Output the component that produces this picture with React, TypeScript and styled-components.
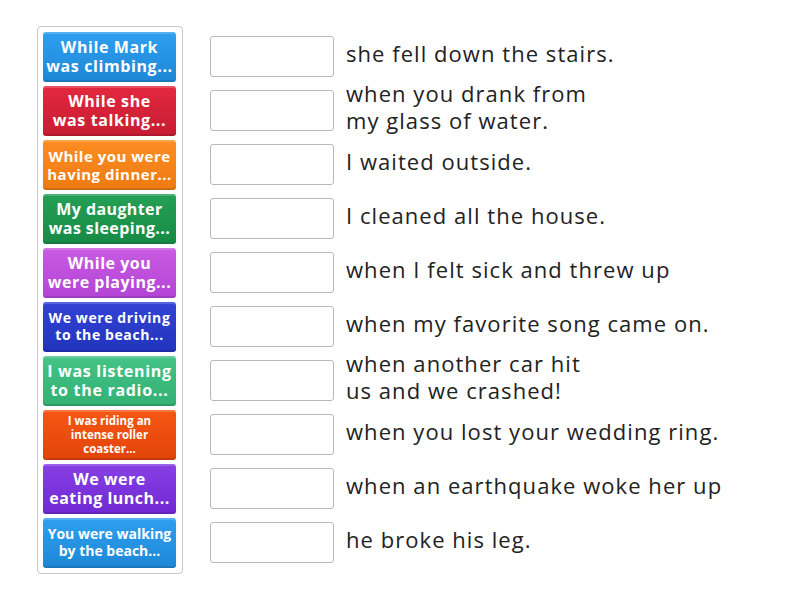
import { styled, createGlobalStyle } from "styled-components";

const GlobalStyle = createGlobalStyle`
    html, body {
        margin: 0;
        padding: 0;
        background: #ffffff;
        font-family: "Open Sans", "Noto Sans", sans-serif;
    }
`;

const tiles = [
    { text: "While Mark was climbing...", top: "#2f9ff0", bottom: "#1d87d6", size: 16, track: 0.6, pad: 3 },
    { text: "While she was talking...", top: "#e3283f", bottom: "#c71c33", size: 16, track: 0.6, pad: 8 },
    { text: "While you were having dinner...", top: "#fd8e22", bottom: "#ee7a12", size: 15, track: 0.5, pad: 2 },
    { text: "My daughter was sleeping...", top: "#24a055", bottom: "#178a45", size: 16, track: 0.4, pad: 2 },
    { text: "While you were playing...", top: "#c95ae3", bottom: "#b444d4", size: 16, track: 0.5, pad: 3 },
    { text: "We were driving to the beach...", top: "#3344d6", bottom: "#2233bd", size: 14, track: 0.6, pad: 2 },
    { text: "I was listening to the radio...", top: "#45c487", bottom: "#33b073", size: 16, track: 0.7, pad: 0 },
    { text: "I was riding an intense roller coaster...", top: "#f55714", bottom: "#e04408", size: 11.5, track: 0, pad: 18 },
    { text: "We were eating lunch...", top: "#8640e4", bottom: "#7029d3", size: 16, track: 0.5, pad: 3 },
    { text: "You were walking by the beach...", top: "#2f9ff0", bottom: "#1d87d6", size: 14, track: 0, pad: 2 },
];

const answers = [
    "she fell down the stairs.",
    "when you drank from\nmy glass of water.",
    "I waited outside.",
    "I cleaned all the house.",
    "when I felt sick and threw up",
    "when my favorite song came on.",
    "when another car hit\nus and we crashed!",
    "when you lost your wedding ring.",
    "when an earthquake woke her up",
    "he broke his leg.",
];

export default function App() {
    return (
        <Page>
            <GlobalStyle />
            <TilePanel>
                {tiles.map((t) => (
                    <Tile
                        key={t.text}
                        $top={t.top}
                        $bottom={t.bottom}
                        $size={t.size}
                        $track={t.track}
                        $pad={t.pad}
                    >
                        {t.text}
                    </Tile>
                ))}
            </TilePanel>
            <Answers>
                {answers.map((a) => (
                    <AnswerRow key={a}>
                        <DropBox />
                        <AnswerText>{a}</AnswerText>
                    </AnswerRow>
                ))}
            </Answers>
        </Page>
    );
}

const Page = styled.div`
    display: flex;
    align-items: flex-start;
    padding: 26px 0 0 37px;
    gap: 27px;
    width: 800px;
    height: 600px;
    box-sizing: border-box;
`;

const TilePanel = styled.div`
    width: 146px;
    box-sizing: border-box;
    border: 1px solid #c8c8c8;
    border-radius: 4px;
    padding: 5px 6px 5px 5px;
    display: flex;
    flex-direction: column;
    gap: 4px;
`;

const Tile = styled.div<{ $top: string; $bottom: string; $size: number; $track: number; $pad: number }>`
    height: 50px;
    box-sizing: border-box;
    border-radius: 3px;
    background: linear-gradient(180deg, ${(p) => p.$top} 0%, ${(p) => p.$bottom} 100%);
    box-shadow: inset 0 2px 0 rgba(255, 255, 255, 0.18), inset 0 -2px 0 rgba(0, 0, 0, 0.12);
    color: #ffffff;
    font-family: "Open Sans", sans-serif;
    font-weight: 700;
    font-size: ${(p) => p.$size}px;
    letter-spacing: ${(p) => p.$track}px;
    line-height: 1.2;
    display: flex;
    align-items: center;
    justify-content: center;
    text-align: center;
    padding: 0 ${(p) => p.$pad}px;
`;

const Answers = styled.div`
    display: flex;
    flex-direction: column;
    padding-top: 4px;
`;

const AnswerRow = styled.div`
    height: 54px;
    display: flex;
    align-items: center;
    gap: 12px;
`;

const DropBox = styled.div`
    width: 124px;
    height: 41px;
    box-sizing: border-box;
    border: 1px solid #b9b9b9;
    border-radius: 3px;
    background: #ffffff;
    flex-shrink: 0;
    margin-top: -1px;
`;

const AnswerText = styled.div`
    font-family: "Open Sans", sans-serif;
    font-size: 22px;
    letter-spacing: 1.05px;
    line-height: 27px;
    color: #222222;
    white-space: pre-line;
    margin-top: -8px;
`;
